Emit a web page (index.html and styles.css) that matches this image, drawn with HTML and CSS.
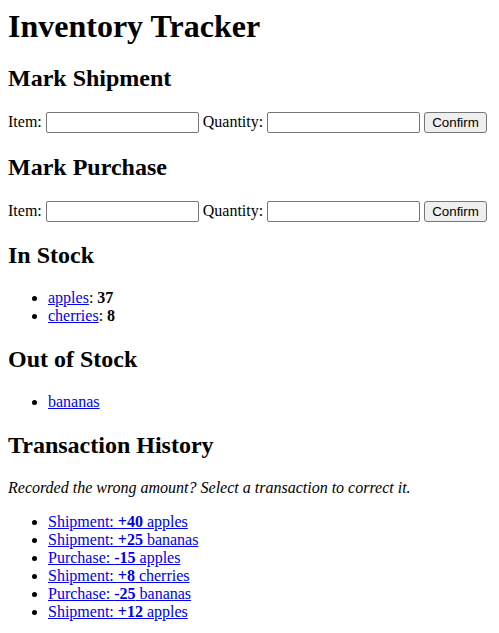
FILE: index.html
```html
<!DOCTYPE html>
<html lang="en">
<head>
<meta charset="utf-8">
<title>Inventory Tracker</title>
<link rel="stylesheet" href="styles.css">
</head>
<body class="page">
<h1 class="title">Inventory Tracker</h1>

<h2 class="section">Mark Shipment</h2>
<form class="entry">
  <label>Item: <input class="field" type="text"></label>
  <label>Quantity: <input class="field" type="text"></label>
  <button class="btn" type="button">Confirm</button>
</form>

<h2 class="section">Mark Purchase</h2>
<form class="entry">
  <label>Item: <input class="field" type="text"></label>
  <label>Quantity: <input class="field" type="text"></label>
  <button class="btn" type="button">Confirm</button>
</form>

<h2 class="section">In Stock</h2>
<ul class="list">
  <li><a href="#">apples</a>: <b>37</b></li>
  <li><a href="#">cherries</a>: <b>8</b></li>
</ul>

<h2 class="section">Out of Stock</h2>
<ul class="list">
  <li><a href="#">bananas</a></li>
</ul>

<h2 class="section">Transaction History</h2>
<p class="note"><i>Recorded the wrong amount? Select a transaction to correct it.</i></p>
<ul class="list">
  <li><a href="#">Shipment: <b>+40</b> apples</a></li>
  <li><a href="#">Shipment: <b>+25</b> bananas</a></li>
  <li><a href="#">Purchase: <b>-15</b> apples</a></li>
  <li><a href="#">Shipment: <b>+8</b> cherries</a></li>
  <li><a href="#">Purchase: <b>-25</b> bananas</a></li>
  <li><a href="#">Shipment: <b>+12</b> apples</a></li>
</ul>
</body>
</html>
```

FILE: styles.css
```css
.page {
  margin: 8px;
  font-family: "Liberation Serif", "Times New Roman", serif;
  font-size: 16px;
  color: #000;
  background: #fff;
}
.title {
  font-size: 32px;
  font-weight: bold;
  margin: 0 0 20px;
}
.section {
  font-size: 24px;
  font-weight: bold;
  margin: 20.75px 0 19.92px;
}
.title + .section {
  margin-top: 0;
}
.entry {
  margin: 0 0 16px;
}
.field {
  box-sizing: border-box;
  width: 153px;
  height: 21px;
  border: 1px solid #767676;
  border-radius: 2px;
  padding: 1px 2px;
  font-family: "Liberation Sans", Arial, sans-serif;
  font-size: 13.33px;
  vertical-align: baseline;
}
.btn {
  box-sizing: border-box;
  height: 21px;
  padding: 1px 7px;
  border: 1px solid #767676;
  border-radius: 3px;
  background: #efefef;
  font-family: "Liberation Sans", Arial, sans-serif;
  font-size: 13.33px;
  color: #000;
}
.list {
  margin: 16px 0;
  padding-left: 40px;
}
.note {
  margin: 16px 0;
}
a {
  color: #0000ee;
}
```
